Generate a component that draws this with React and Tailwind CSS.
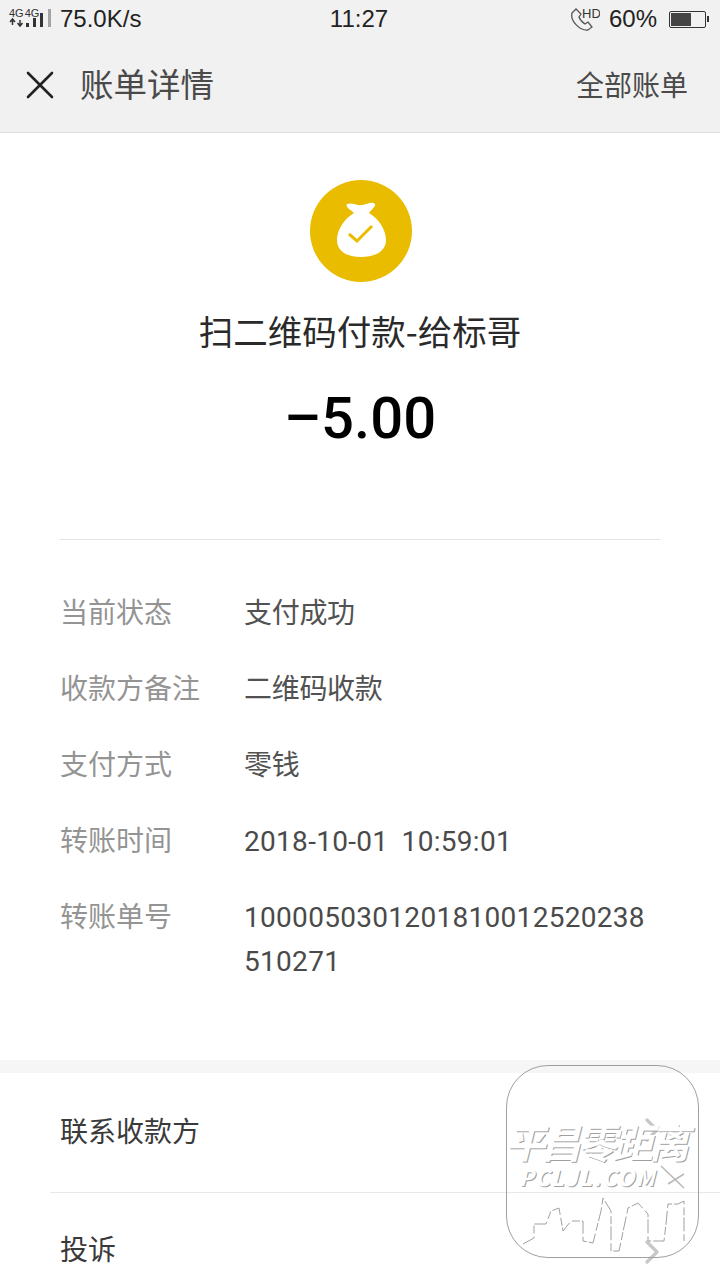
import React from 'react';
import { X, ChevronRight } from 'lucide-react';

const cjk = '"Noto Sans CJK SC", "Noto Sans", sans-serif';

const Row = ({ label, digits, children }) => (
  <div className="flex items-start">
    <div className="w-[184px] shrink-0 text-[#949494]">{label}</div>
    <div
      className={
        digits
          ? "w-[404px] pt-[3px] -mb-[3px] break-all text-[#4a4a4a] leading-[44px] font-['Roboto'] tracking-[0.3px] [word-spacing:6px]"
          : 'w-[404px] break-all text-[#525252] leading-[44px] tracking-[-0.3px]'
      }
    >
      {children}
    </div>
  </div>
);

const Signal = () => (
  <div className="relative w-[43px] h-[28px] shrink-0">
    <div className="flex gap-[1px] mt-[2px] text-[11px] leading-[12px] text-[#333] font-['Liberation_Sans']">
      <span>4G</span>
      <span>4G</span>
    </div>
    <svg className="absolute left-0 top-0" width="43" height="28" viewBox="0 0 43 28">
      <path d="M3.500 20v-5M1 17l2.500-3 2.500 3M11 15v5M8.500 18l2.500 3 2.500-3" stroke="#333" strokeWidth="1.500" fill="none" />
      <rect x="17" y="18" width="3" height="4" fill="#333" />
      <rect x="24" y="13" width="3" height="9" fill="#333" />
      <rect x="31" y="8" width="3" height="14" fill="#333" />
      <rect x="39" y="4" width="3" height="18" fill="#a5a5a5" />
    </svg>
  </div>
);

const MoneyBag = () => (
  <div className="ml-[2px] w-[102px] h-[102px] rounded-full bg-[#eabc00] flex items-center justify-center">
    <svg width="102" height="102" viewBox="0 0 102 102">
      <path
        d="M37 24C42 22 47 26 52 25C57 24 62 21 65 24C66 26 62 29 59 33C69 39 76 50 76 60C76 72 64 77 51 77C38 77 27 72 27 60C27 50 34 39 44 33C41 30 35 27 37 24Z"
        fill="#fff"
      />
      <path d="M39 54l8 7 15-15" stroke="#eabc00" strokeWidth="3" fill="none" />
    </svg>
  </div>
);

const Watermark = () => (
  <div className="absolute left-[506px] top-[1065px] w-[193px] h-[193px] rounded-[42px] border-[1.500px] border-[#a0a0a0] overflow-hidden">
    <div className="absolute left-[-2px] top-[54px] text-[40px] leading-[42px] font-bold italic whitespace-nowrap text-white tracking-[-4px] [text-shadow:1px_1px_0_#a0a0a0]">
      平昌零距离
    </div>
    <div className="absolute left-[12px] top-[100px] text-[22px] leading-[20px] font-bold italic whitespace-nowrap text-white tracking-[1.500px] [text-shadow:1px_1px_0_#a0a0a0]">
      PCLJL.COM
    </div>
    <svg className="absolute left-0 top-0" width="193" height="193" viewBox="0 0 193 193">
      <path
        d="M16 178L27 172V158H39L44 145L52 142L56 165L64 155H76V175L86 177L94 145L96 132L104 145V185H112L121 142L131 137L141 148V175H157L159 158L161 138H171L177 135V175"
        stroke="#a0a0a0"
        strokeWidth="1"
        strokeDasharray="14 3 8 2"
        fill="none"
      />
      <path d="M154 100L177 122M177 108L161 118" stroke="#b8b8b8" strokeWidth="1.500" fill="none" />
    </svg>
  </div>
);

export default function App() {
  return (
    <div
      className="relative w-[720px] h-[1280px] overflow-hidden bg-white"
      style={{ fontFamily: cjk }}
    >
      <div className="h-[133px] bg-[#f1f1f1] border-b border-[#dedede]">
        <div className="flex items-center justify-between h-[38px] pl-[9px] pr-[11px] text-[#222] text-[24px] font-['Liberation_Sans']">
          <div className="flex items-center w-[260px]">
            <Signal />
            <span className="ml-[8px]">75.0K/s</span>
          </div>
          <span>11:27</span>
          <div className="flex items-center justify-end w-[260px]">
            <svg width="30" height="24" viewBox="0 0 30 24" className="mr-[9px]">
              <path d="M2 6l4-4 5 5-2 3c1 3 3 5 6 7l3-2 4 5-4 3C10 24 0 14 2 6z" stroke="#555" strokeWidth="1.300" fill="none" />
              <text x="12" y="11" fontSize="13" fill="#333" fontFamily="Liberation Sans">HD</text>
            </svg>
            <span>60%</span>
            <div className="ml-[12px] w-[37px] h-[17px] border border-[#333] rounded-[2px] p-[1px]">
              <div className="w-[20px] h-full bg-[#444]" />
            </div>
            <div className="w-[2px] h-[6px] bg-[#333] ml-[1px]" />
          </div>
        </div>
        <div className="flex items-center justify-between h-[94px] pl-[16px] pr-[32px]">
          <div className="flex items-center">
            <X size={48} strokeWidth={1.300} className="text-[#222]" />
            <span className="ml-[16px] mb-[4px] text-[33.500px] text-[#4a4a4a]">账单详情</span>
          </div>
          <span className="mb-[2px] text-[28px] text-[#4a4a4a]">全部账单</span>
        </div>
      </div>

      <div className="flex flex-col items-center pt-[47px]">
        <MoneyBag />
        <div className="mt-[24px] text-[34.500px] leading-[48px] text-[#2a2a2a]">扫二维码付款-给标哥</div>
        <div className="mt-[28px] text-[58px] leading-[72px] font-medium text-black font-['Roboto']">–5.00</div>
      </div>

      <div className="mx-[60px] mt-[85px] border-t border-[#e4e4e4] pt-[49px] h-[521px] flex flex-col gap-[32px] text-[28px] leading-[44px]">
        <Row label="当前状态">支付成功</Row>
        <Row label="收款方备注">二维码收款</Row>
        <Row label="支付方式">零钱</Row>
        <Row label="转账时间" digits>2018-10-01 10:59:01</Row>
        <Row label="转账单号" digits>1000050301201810012520238510271</Row>
      </div>

      <div className="h-[13px] bg-[#f6f6f6]" />
      <div className="pl-[50px] text-[28px] text-[#3a3a3a]">
        <div className="h-[120px] border-b border-[#e8e8e8] pl-[10px] pr-[48px] pb-[6px] flex items-center justify-between">
          <span>联系收款方</span>
          <ChevronRight size={40} strokeWidth={2} className="text-[#c8c8c8]" />
        </div>
        <div className="h-[112px] pl-[10px] pr-[48px] flex items-center justify-between">
          <span className="mb-[2px]">投诉</span>
          <ChevronRight size={40} strokeWidth={2} className="mt-[6px] text-[#c8c8c8]" />
        </div>
      </div>

      <Watermark />
    </div>
  );
}
